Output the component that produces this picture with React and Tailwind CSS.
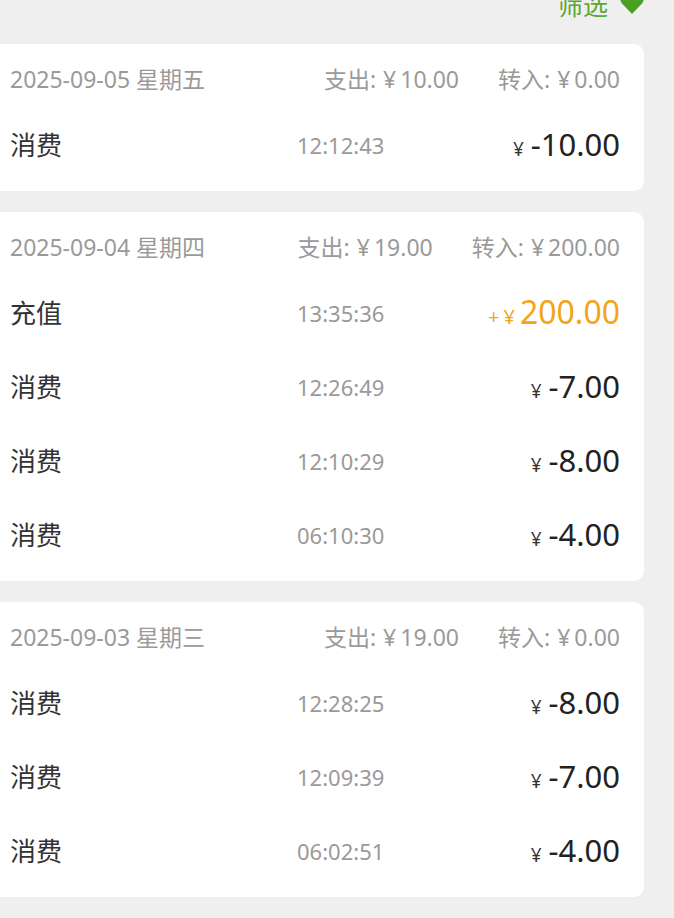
import React from "react";

const days = [
  {
    date: "2025-09-05 星期五",
    out: "10.00",
    inc: "0.00",
    rows: [{ label: "消费", time: "12:12:43", amount: "-10.00" }],
  },
  {
    date: "2025-09-04 星期四",
    out: "19.00",
    inc: "200.00",
    rows: [
      { label: "充值", time: "13:35:36", amount: "200.00", plus: true },
      { label: "消费", time: "12:26:49", amount: "-7.00" },
      { label: "消费", time: "12:10:29", amount: "-8.00" },
      { label: "消费", time: "06:10:30", amount: "-4.00" },
    ],
  },
  {
    date: "2025-09-03 星期三",
    out: "19.00",
    inc: "0.00",
    rows: [
      { label: "消费", time: "12:28:25", amount: "-8.00" },
      { label: "消费", time: "12:09:39", amount: "-7.00" },
      { label: "消费", time: "06:02:51", amount: "-4.00" },
    ],
  },
];

const font = { fontFamily: '"Noto Sans", "Noto Sans CJK SC", sans-serif' };

const Money = ({ label, value }) => (
  <div className="flex items-baseline">
    <span>{label}:</span>
    <span className="ml-[7px] mr-[4px]">¥</span>
    <span>{value}</span>
  </div>
);

const Row = ({ row }) => (
  <div className="flex h-[74px] items-center">
    <div className="w-[287px] text-[26px] leading-[30px] text-[#333333]">{row.label}</div>
    <div className="text-[22px] leading-[30px] text-[#9a9a9a]">{row.time}</div>
    <div className="flex-1" />
    {row.plus ? (
      <div className="flex items-baseline text-[#f2a516]">
        <span className="text-[20px]">+</span>
        <span className="ml-[4px] text-[20px]">¥</span>
        <span className="ml-[5px] text-[32px] leading-[36px]">{row.amount}</span>
      </div>
    ) : (
      <div className="flex items-baseline text-[#222222]">
        <span className="text-[19px] text-[#333333]">¥</span>
        <span className="ml-[7px] text-[31px] leading-[36px]">{row.amount}</span>
      </div>
    )}
  </div>
);

const DayCard = ({ day }) => (
  <div className="mr-[30px] rounded-r-[10px] bg-white pb-[9px] pl-[10px] pr-[24px]">
    <div className="flex pt-[20px] pb-[14px] text-[23px] leading-[30px] text-[#9a9a9a]">
      <div>{day.date}</div>
      <div className="flex-1" />
      <Money label="支出" value={day.out} />
      <div className="ml-[39px]">
        <Money label="转入" value={day.inc} />
      </div>
    </div>
    {day.rows.map((row, i) => (
      <Row key={i} row={row} />
    ))}
  </div>
);

export default function App() {
  return (
    <div className="h-[918px] overflow-hidden bg-[#efefef]" style={font}>
      {/* filter bar */}
      <div className="flex h-[44px] items-start justify-end overflow-hidden pr-[30px]">
        <div className="-mt-[9px] text-[25px] leading-[28px] text-[#5aa832]">筛选</div>
        <svg className="-mt-[8px] ml-[12px]" width="24" height="22" viewBox="0 0 24 22">
          <path
            d="M12 22 L2 11.5 C-1 8 0 2 5 1 C8 0.5 10.5 2 12 4.5 C13.5 2 16 0.5 19 1 C24 2 25 8 22 11.5 Z"
            fill="#4a9e22"
          />
        </svg>
      </div>

      <div className="flex flex-col gap-[21px]">
        {days.map((day) => (
          <DayCard key={day.date} day={day} />
        ))}
      </div>
    </div>
  );
}
